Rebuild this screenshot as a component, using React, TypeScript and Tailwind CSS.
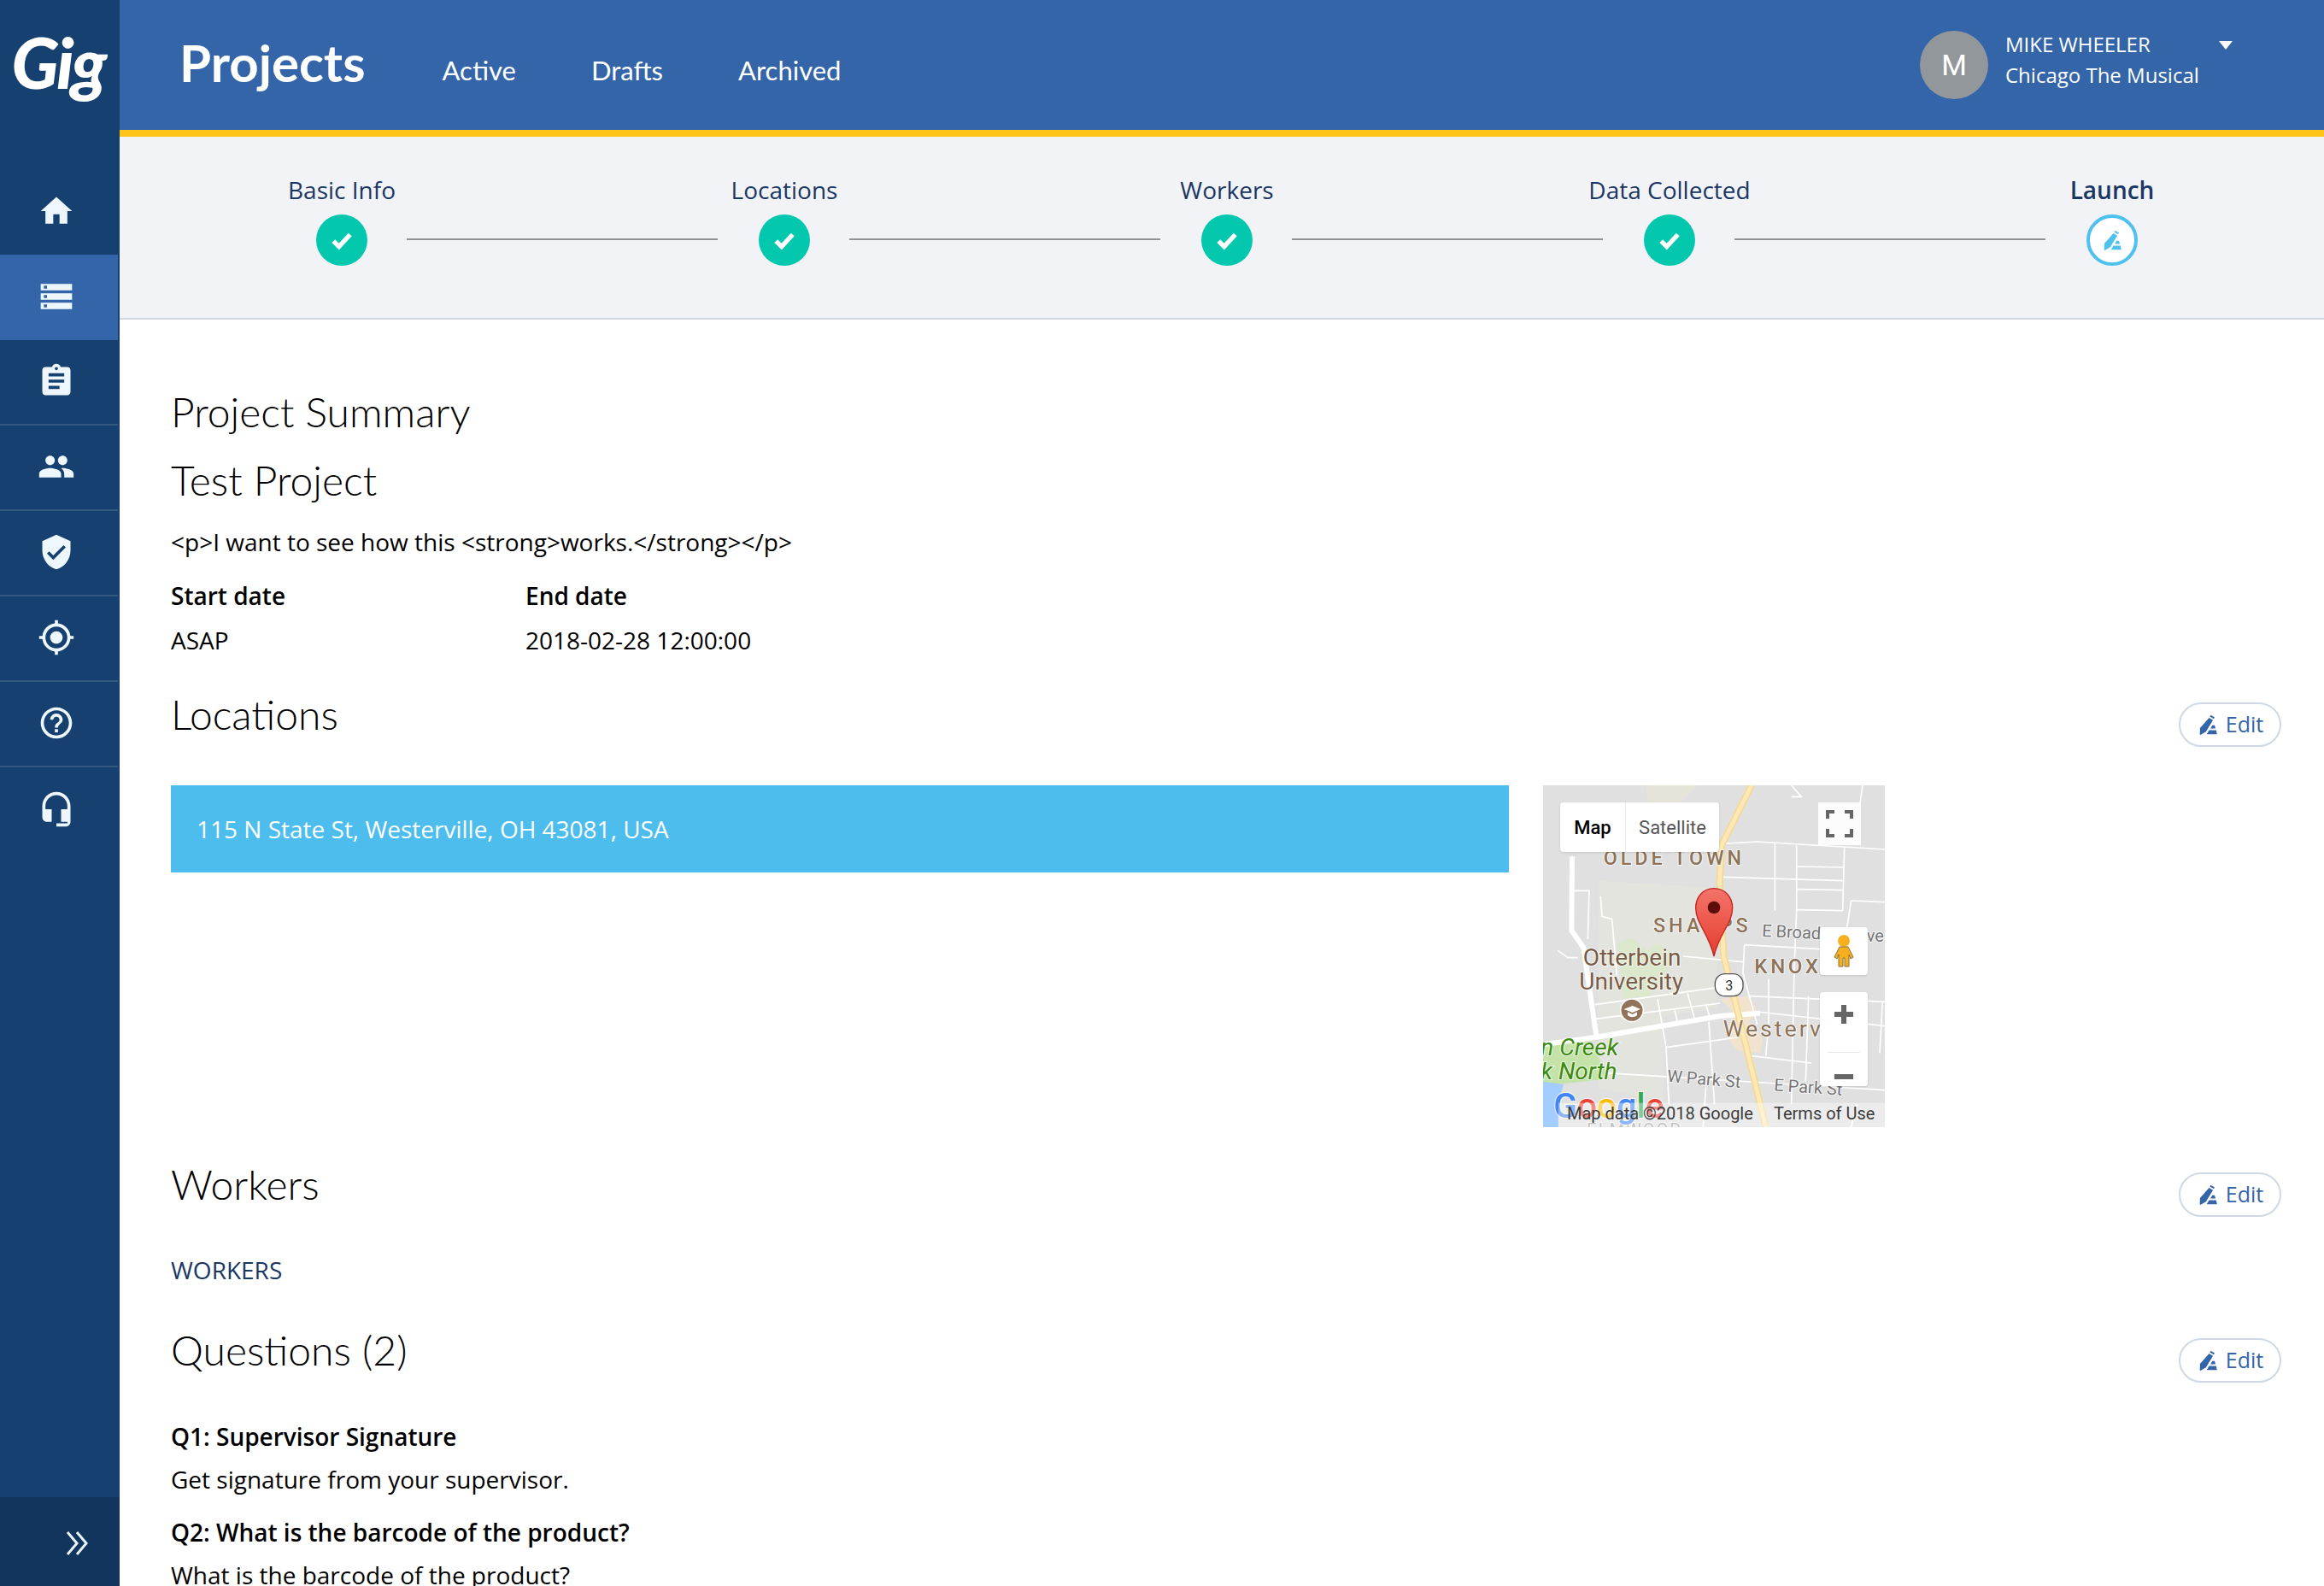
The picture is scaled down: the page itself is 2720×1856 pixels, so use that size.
import type { ReactNode } from 'react'

const navIcons = [
  'M10 20v-6h4v6h5v-8h3L12 3 2 12h3v8z',
  'M2 20h20v-4H2v4zm2-3h2v2H4v-2zM2 4v4h20V4H2zm4 3H4V5h2v2zm-4 7h20v-4H2v4zm2-3h2v2H4v-2z',
  'M19 3h-4.18C14.4 1.84 13.3 1 12 1c-1.3 0-2.4.84-2.82 2H5c-1.1 0-2 .9-2 2v14c0 1.1.9 2 2 2h14c1.1 0 2-.9 2-2V5c0-1.1-.9-2-2-2zm-7 0c.55 0 1 .45 1 1s-.45 1-1 1-1-.45-1-1 .45-1 1-1zm2 14H7v-2h7v2zm3-4H7v-2h10v2zm0-4H7V7h10v2z',
  'M16 11c1.66 0 2.99-1.34 2.99-3S17.66 5 16 5c-1.66 0-3 1.34-3 3s1.34 3 3 3zm-8 0c1.66 0 2.99-1.34 2.99-3S9.66 5 8 5C6.34 5 5 6.34 5 8s1.34 3 3 3zm0 2c-2.33 0-7 1.17-7 3.5V19h14v-2.5c0-2.33-4.67-3.5-7-3.5zm8 0c-.29 0-.62.02-.97.05 1.16.84 1.97 1.97 1.97 3.45V19h6v-2.5c0-2.33-4.67-3.5-7-3.5z',
  'M12 1L3 5v6c0 5.55 3.84 10.74 9 12 5.16-1.26 9-6.45 9-12V5l-9-4zm-2 16l-4-4 1.41-1.41L10 14.17l6.59-6.59L18 9l-8 8z',
  'M12 8c-2.21 0-4 1.79-4 4s1.79 4 4 4 4-1.79 4-4-1.79-4-4-4zm8.94 3c-.46-4.17-3.77-7.48-7.94-7.94V1h-2v2.06C6.83 3.52 3.52 6.83 3.06 11H1v2h2.06c.46 4.17 3.77 7.48 7.94 7.94V23h2v-2.06c4.17-.46 7.48-3.77 7.94-7.94H23v-2h-2.06zM12 19c-3.87 0-7-3.13-7-7s3.13-7 7-7 7 3.13 7 7-3.13 7-7 7z',
  'M11 18h2v-2h-2v2zm1-16C6.48 2 2 6.48 2 12s4.48 10 10 10 10-4.48 10-10S17.52 2 12 2zm0 18c-4.41 0-8-3.59-8-8s3.59-8 8-8 8 3.59 8 8-3.59 8-8 8zm0-14c-2.21 0-4 1.79-4 4h2c0-1.1.9-2 2-2s2 .9 2 2c0 2-3 1.75-3 5h2c0-2.25 3-2.5 3-5 0-2.21-1.79-4-4-4z',
  'M12 1c-4.97 0-9 4.03-9 9v7c0 1.66 1.34 3 3 3h3v-8H5v-2c0-3.87 3.13-7 7-7s7 3.13 7 7v2h-4v8h4v1h-7v2h6c1.66 0 3-1.34 3-3V10c0-4.97-4.03-9-9-9z',
]

const steps = ['Basic Info', 'Locations', 'Workers', 'Data Collected', 'Launch']

function EditIcon({ className }: { className: string }) {
  return (
    <svg className={className} viewBox="0 0 24 24" fill="currentColor" aria-hidden="true">
      <path d="M15.2 1.6l4.2 2.5-1 1.7-4.2-2.5zM13.4 4.6l4.2 2.5-7.6 12.6-6 3.3-.6-.4.2-6.8z" />
      <path d="M16.8 12.8h2.6l1 3.4h-5.6zM13.4 18h7.6l1 4.4H10.8z" />
    </svg>
  )
}

function EditButton() {
  return (
    <button
      className="mt-[14px] flex h-[52px] w-[120px] items-center justify-center gap-[8px] rounded-full border-2 border-[#cfd8e3] bg-white text-[25px] text-[#3465a9]"
      type="button"
    >
      <EditIcon className="h-[26px] w-[26px]" />
      Edit
    </button>
  )
}

function SectionHeading({ title, edit, className }: { title: string; edit?: boolean; className?: string }) {
  return (
    <div className={`flex h-[65px] items-start justify-between ${className ?? ''}`}>
      <h2 className="font-['Lato',sans-serif] text-[48px] leading-[56px] font-light text-black">{title}</h2>
      {edit && <EditButton />}
    </div>
  )
}

function MapLabel({ x, y, size, fill, spacing, weight, rotate, style, children }: {
  x: number
  y: number
  size: number
  fill: string
  spacing?: number
  weight?: number
  rotate?: number
  style?: 'italic'
  children: ReactNode
}) {
  return (
    <text
      x={x}
      y={y}
      fontSize={size}
      fill={fill}
      letterSpacing={spacing}
      fontWeight={weight}
      fontStyle={style}
      fontFamily="Roboto, sans-serif"
      stroke="#ffffff"
      strokeOpacity={0.75}
      strokeWidth={6}
      paintOrder="stroke"
      transform={rotate ? `rotate(${rotate} ${x} ${y})` : undefined}
    >
      {children}
    </text>
  )
}

function StaticMap() {
  const minor = [
    'M700 265 L830 258 L1278 285',
    'M892 265 L892 500',
    'M968 272 L968 500 L960 700 L950 1180',
    'M1136 280 L1130 500',
    'M710 382 L1130 395',
    'M968 345 L1136 348',
    'M968 425 L1130 428',
    'M968 497 L1130 500',
    'M1160 465 L1278 470',
    'M1160 465 L1135 620',
    'M785 620 L1050 635',
    'M785 620 L780 720 L830 900',
    'M570 660 L780 680',
    'M260 830 L690 770',
    'M262 880 L700 825',
    'M480 810 L510 980 L520 1180',
    'M585 790 L610 880',
    'M540 850 L550 890',
    'M650 830 L665 880',
    'M660 890 L680 1180',
    'M510 980 L760 945',
    'M800 800 L1278 820',
    'M830 855 L1278 905',
    'M870 740 L870 900 L860 1010',
    'M1010 800 L1000 1100',
    'M810 1010 L1020 1035',
    'M300 1070 L1278 1130',
    'M188 430 L240 430 L235 600',
    'M280 450 L285 520 L320 530 L340 760',
    'M130 640 L165 665 L200 665',
    'M950 60 L985 100 L950 100',
    'M1200 60 L1190 130',
    'M1270 820 L1260 1000',
    'M1180 1180 L1160 1260',
    'M650 1120 L640 1260',
  ]

  return (
    <svg className="h-full w-full" viewBox="78 60 1200 1200" aria-hidden="true">
      <defs>
        <linearGradient id="pin" x1="0" y1="0" x2="0" y2="1">
          <stop offset="0" stopColor="#f4746b" />
          <stop offset="1" stopColor="#e53c2e" />
        </linearGradient>
      </defs>
      <rect x="78" y="60" width="1200" height="1200" fill="#e0e0e0" />
      <path d="M275 395 L680 420 L690 840 L500 870 L500 1170 L270 1120 Z" fill="#e4e4de" />
      <path d="M340 615 L390 595 L440 640 L480 615 L520 640 L520 700 L450 800 L360 810 Z" fill="#dbe8cc" />
      <path d="M78 970 L240 940 L270 1010 L310 1090 L130 1110 L78 1100 Z" fill="#c5e3a8" />
      <path d="M78 1100 L150 1110 L130 1180 L132 1260 L78 1260 Z" fill="#a3ccff" />
      <path d="M440 60 L620 60 L560 120 L445 118 Z" fill="#e6e4d8" />
      <path d="M700 810 L800 800 L830 850 L800 890 L850 950 L840 1000 L760 990 L730 950 L740 850 Z" fill="#f2e3cf" />
      <g fill="none" stroke="#ffffff" strokeWidth={5}>
        {minor.map((d) => (
          <path d={d} key={d} />
        ))}
      </g>
      <g fill="none" stroke="#ffffff" strokeWidth={18} strokeLinejoin="round">
        <path d="M180 310 L178 570 L220 630 L265 940" />
        <path d="M78 970 L260 945 L700 870 L840 860" />
      </g>
      <path d="M810 60 L735 210 L705 270 L698 400 L712 660 L760 850 L860 1260" fill="none" stroke="#f6d98f" strokeWidth={24} />
      <path d="M810 60 L735 210 L705 270 L698 400 L712 660 L760 850 L860 1260" fill="none" stroke="#fde9b8" strokeWidth={14} />

      <MapLabel x={290} y={338} size={70} fill="#8d7357" spacing={12} weight={500}>OLDE TOWN</MapLabel>
      <MapLabel x={465} y={576} size={70} fill="#8d7357" spacing={12} weight={500}>SHA</MapLabel>
      <MapLabel x={698} y={576} size={70} fill="#8d7357" spacing={12} weight={500}>PS</MapLabel>
      <MapLabel x={846} y={590} size={60} fill="#757575" rotate={3}>E Broad</MapLabel>
      <MapLabel x={820} y={720} size={72} fill="#8d7357" spacing={11} weight={500}>KNOX</MapLabel>
      <MapLabel x={1214} y={610} size={60} fill="#757575">ve</MapLabel>
      <MapLabel x={218} y={694} size={84} fill="#795c45">Otterbein</MapLabel>
      <MapLabel x={205} y={778} size={84} fill="#795c45">University</MapLabel>
      <MapLabel x={710} y={942} size={80} fill="#8d7357" spacing={9}>Westerv</MapLabel>
      <MapLabel x={70} y={1008} size={84} fill="#3c8a10" style="italic">n Creek</MapLabel>
      <MapLabel x={70} y={1092} size={84} fill="#3c8a10" style="italic">k North</MapLabel>
      <MapLabel x={512} y={1100} size={60} fill="#757575" rotate={5}>W Park St</MapLabel>
      <MapLabel x={888} y={1132} size={60} fill="#757575" rotate={4}>E Park St</MapLabel>
      <MapLabel x={232} y={1290} size={60} fill="#9a9a9a" spacing={6}>ELMWOOD</MapLabel>

      <rect x="682" y="722" width="98" height="78" rx="34" fill="#ffffff" stroke="#555555" strokeWidth={4} />
      <text x="731" y="780" fontSize={48} fill="#333333" textAnchor="middle" fontFamily="Roboto, sans-serif">3</text>

      <circle cx="390" cy="850" r="40" fill="#92735a" stroke="#ffffff" strokeWidth={5} />
      <path d="M362 846 L392 834 L420 846 L392 858 Z" fill="#ffffff" />
      <path d="M375 856 L375 868 Q392 880 408 868 L408 856 L392 864 Z" fill="#ffffff" />

      <text x="115" y="1226" fontSize={122} fontFamily="Roboto, sans-serif" fontWeight={500} stroke="#ffffff" strokeOpacity={0.6} strokeWidth={8} paintOrder="stroke">
        <tspan fill="#4285f4">G</tspan>
        <tspan fill="#ea4335">o</tspan>
        <tspan fill="#fbbc05">o</tspan>
        <tspan fill="#4285f4">g</tspan>
        <tspan fill="#34a853">l</tspan>
        <tspan fill="#ea4335">e</tspan>
      </text>

      <path
        d="M678 422 C640 422 614 452 614 490 C614 545 660 580 678 660 C696 580 743 545 743 490 C743 452 716 422 678 422 Z"
        fill="url(#pin)"
        stroke="#c5221f"
        strokeWidth={4}
      />
      <circle cx="678" cy="489" r="22" fill="#5c0f0a" />

      <rect x="132" y="1175" width="1146" height="85" fill="#ffffff" fillOpacity={0.4} />
      <text x="162" y="1234" fontSize={60} fill="#3c3c3c" fontFamily="Roboto, sans-serif">Map data ©2018 Google</text>
      <text x="888" y="1234" fontSize={60} fill="#3c3c3c" fontFamily="Roboto, sans-serif">Terms of Use</text>
    </svg>
  )
}

function MapCard() {
  return (
    <div className="relative h-[400px] w-[400px] shrink-0 overflow-hidden font-['Roboto',sans-serif]">
      <StaticMap />
      <div className="absolute top-[20px] left-[20px] flex h-[58px] w-[186px] items-center rounded-[4px] bg-white text-[22px] shadow-sm">
        <span className="flex h-full w-[76px] items-center justify-center font-medium text-black">Map</span>
        <span className="flex h-full flex-1 items-center justify-center border-l border-[#ececec] text-[#565656]">Satellite</span>
      </div>
      <div className="absolute top-[20px] right-[28px] flex h-[50px] w-[50px] items-center justify-center bg-white/90">
        <svg className="h-[32px] w-[32px]" viewBox="0 0 32 32" fill="none" stroke="#666666" strokeWidth={4} aria-hidden="true">
          <path d="M2 10V2h8M22 2h8v8M30 22v8h-8M10 30H2v-8" />
        </svg>
      </div>
      <div className="absolute top-[166px] right-[20px] flex h-[56px] w-[56px] items-center justify-center rounded-[4px] bg-white shadow-sm">
        <svg className="h-[38px] w-[24px]" viewBox="0 0 24 38" aria-hidden="true">
          <circle cx="12" cy="7" r="7" fill="#f6b01e" />
          <path d="M7 14h10l6 12-3 2-2-5v14h-5V27h-2v10H6V23l-2 5-3-2z" fill="#f6b01e" stroke="#8a6d3b" strokeWidth={1} />
        </svg>
      </div>
      <div className="absolute top-[242px] right-[20px] flex h-[110px] w-[56px] flex-col items-center rounded-[4px] bg-white shadow-sm">
        <div className="flex h-[70px] items-center justify-center pb-[18px]">
          <svg className="h-[22px] w-[22px]" viewBox="0 0 22 22" fill="#666666" aria-hidden="true">
            <path d="M8 0h6v8h8v6h-8v8H8v-8H0V8h8z" />
          </svg>
        </div>
        <div className="h-px w-[38px] bg-[#e6e6e6]" />
        <div className="flex flex-1 items-center justify-center pt-[16px]">
          <div className="h-[6px] w-[22px] bg-[#666666]" />
        </div>
      </div>
    </div>
  )
}

export default function App() {
  return (
    <div className="flex h-[1856px] w-[2720px] overflow-hidden bg-white font-['Open_Sans',sans-serif] text-black">
      <aside className="flex w-[140px] shrink-0 flex-col bg-[#15406f]">
        <div className="flex h-[198px] flex-col">
          <div className="flex h-[152px] items-center justify-center pr-[4px] pb-[8px] font-['Lato',sans-serif] text-[82px] leading-none font-black tracking-[-3px] text-white italic">
            Gig
          </div>
          <div className="flex-1" />
        </div>
        <nav className="flex flex-col">
          {navIcons.map((d, i) => (
            <a
              className={`flex h-[100px] w-[138px] items-center justify-center pr-[6px] pb-[2px] ${i === 1 ? 'bg-[#3465a9]' : ''} ${i > 1 && i < 7 ? 'border-b-2 border-[#34597f]' : ''}`}
              href="#"
              key={d}
            >
              <svg className="h-[44px] w-[44px] text-[#eef7fd]" viewBox="0 0 24 24" fill="currentColor" aria-hidden="true">
                <path d={d} />
              </svg>
            </a>
          ))}
        </nav>
        <div className="mt-auto flex h-[104px] items-center justify-center bg-[#11355c] pt-[4px] pl-[40px]">
          <svg className="h-[32px] w-[32px] text-[#e8f3fb]" viewBox="0 0 32 32" fill="none" stroke="currentColor" strokeWidth={3} aria-hidden="true">
            <path d="M5 3l11 13L5 29M16 3l11 13-11 13" />
          </svg>
        </div>
      </aside>

      <div className="flex min-w-0 flex-1 flex-col">
        <header className="flex h-[160px] shrink-0 items-center border-b-[8px] border-[#fdc51a] bg-[#3465a9] pl-[70px] text-white">
          <h1 className="mb-[6px] font-['Lato',sans-serif] text-[60px] leading-none font-bold">Projects</h1>
          <nav className="mt-[12px] ml-[90px] flex gap-[88px] font-['Lato',sans-serif] text-[31px]">
            <a href="#">Active</a>
            <a href="#">Drafts</a>
            <a href="#">Archived</a>
          </nav>
          <div className="ml-auto flex items-start pr-[107px]">
            <div className="flex h-[80px] w-[80px] items-center justify-center rounded-full bg-[#92979b] font-['Roboto',sans-serif] text-[34px]">M</div>
            <div className="-mt-[2px] ml-[20px] w-[250px] text-[24px] leading-[36px]">
              <div>MIKE WHEELER</div>
              <div>Chicago The Musical</div>
            </div>
            <div className="mt-[12px] h-0 w-0 border-x-[8px] border-t-[10px] border-x-transparent border-t-white" />
          </div>
        </header>

        <section className="flex h-[214px] shrink-0 items-start border-b-2 border-[#d0d7de] bg-[#f2f3f7] pt-[40px] pl-[230px] text-[#1a3763]">
          {steps.map((step, i) => (
            <div className="flex items-end" key={step}>
              <div className="flex w-[60px] flex-col items-center">
                <div className={`h-[44px] text-[28px] leading-[44px] whitespace-nowrap ${i === 4 ? 'font-semibold' : ''}`}>{step}</div>
                <div
                  className={`mt-[7px] flex h-[60px] w-[60px] items-center justify-center rounded-full ${i === 4 ? 'border-[4px] border-[#4fc1ee] bg-white text-[#4fc1ee]' : 'bg-[#03c8ae] text-white'}`}
                >
                  {i === 4 ? (
                    <EditIcon className="h-[26px] w-[26px]" />
                  ) : (
                    <svg className="h-[26px] w-[26px]" viewBox="0 0 24 24" fill="none" stroke="currentColor" strokeWidth={5} aria-hidden="true">
                      <path d="M3 13l6 6L21 6" />
                    </svg>
                  )}
                </div>
              </div>
              {i < 4 && <div className="mr-[48px] mb-[30px] ml-[46px] h-[2px] w-[364px] bg-[#8c9296]" />}
            </div>
          ))}
        </section>

        <main className="flex-1 pr-[50px] pl-[60px] text-[28px]">
          <h2 className="mt-[80px] font-['Lato',sans-serif] text-[48px] leading-[56px] font-light">Project Summary</h2>
          <h2 className="mt-[24px] font-['Lato',sans-serif] text-[48px] leading-[56px] font-light">Test Project</h2>
          <p className="mt-[22px] leading-[44px]">{'<p>I want to see how this <strong>works.</strong></p>'}</p>
          <div className="mt-[19px] flex leading-[44px]">
            <div className="w-[415px]">
              <div className="font-semibold">Start date</div>
              <div className="mt-[8px]">ASAP</div>
            </div>
            <div>
              <div className="font-semibold">End date</div>
              <div className="mt-[8px]">2018-02-28 12:00:00</div>
            </div>
          </div>

          <SectionHeading className="mt-[37px]" edit title="Locations" />
          <div className="mt-[46px] flex items-start gap-[40px]">
            <div className="flex h-[102px] w-[1566px] shrink-0 items-center bg-[#4cbdec] pl-[30px] text-white">115 N State St, Westerville, OH 43081, USA</div>
            <MapCard />
          </div>

          <SectionHeading className="mt-[39px]" edit title="Workers" />
          <a className="mt-[41px] block leading-[44px] text-[#1a3763]" href="#">WORKERS</a>

          <SectionHeading className="mt-[44px]" edit title="Questions (2)" />
          <div className="mt-[42px] leading-[44px] font-semibold">Q1: Supervisor Signature</div>
          <div className="mt-[6px] leading-[44px]">Get signature from your supervisor.</div>
          <div className="mt-[18px] leading-[44px] font-semibold">Q2: What is the barcode of the product?</div>
          <div className="mt-[6px] leading-[44px]">What is the barcode of the product?</div>
        </main>
      </div>
    </div>
  )
}
